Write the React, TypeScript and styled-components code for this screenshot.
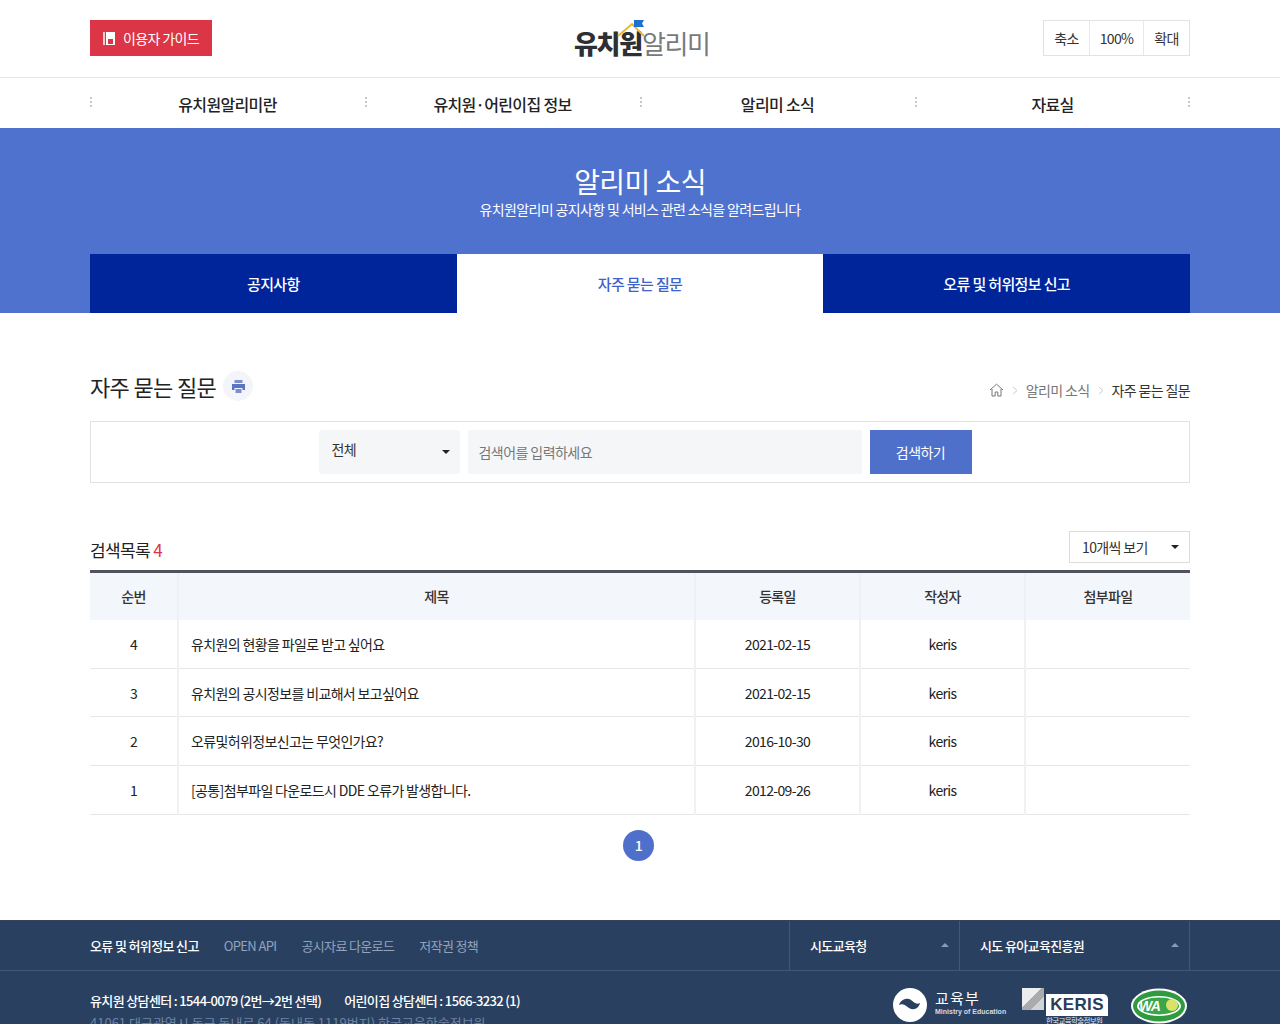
import React from "react";
import styled, { createGlobalStyle } from "styled-components";

const GlobalStyle = createGlobalStyle`
  * { box-sizing: border-box; }
  html, body { margin: 0; padding: 0; background: #fff; }
  body {
    font-family: "Noto Sans CJK KR", "Noto Sans", sans-serif;
    color: #222;
    letter-spacing: -0.04em;
  }
  ul { list-style: none; margin: 0; padding: 0; }
`;

const rows = [
  { no: 4, title: "유치원의 현황을 파일로 받고 싶어요", date: "2021-02-15" },
  { no: 3, title: "유치원의 공시정보를 비교해서 보고싶어요", date: "2021-02-15" },
  { no: 2, title: "오류및허위정보신고는 무엇인가요?", date: "2016-10-30" },
  { no: 1, title: "[공통]첨부파일 다운로드시 DDE 오류가 발생합니다.", date: "2012-09-26" },
];

const Inner = styled.div`
  width: 1100px;
  margin: 0 auto;
`;

const Header = styled.header`
  height: 78px;
  border-bottom: 1px solid #e6e6e6;
`;

const HeaderInner = styled(Inner)`
  height: 77px;
  padding-top: 20px;
  display: grid;
  grid-template-columns: 1fr auto 1fr;
  align-items: flex-start;
`;

const GuideButton = styled.a`
  justify-self: start;
  width: 122px;
  height: 36px;
  display: flex;
  align-items: center;
  justify-content: center;
  gap: 7px;
  background: #dc3545;
  color: #fff;
  font-size: 14px;
`;

const Logo = styled.div`
  position: relative;
  margin-top: 5px;
  width: 132px;
  height: 34px;
  display: flex;
  align-items: center;
  font-size: 26px;
  line-height: 34px;
  letter-spacing: -0.05em;
  padding-top: 2px;
  color: #77797c;
  white-space: nowrap;
`;

const LogoStrong = styled.strong`
  color: #2c2f33;
  font-weight: 900;
`;

const LogoRoof = styled.svg`
  position: absolute;
  left: 40px;
  top: -5px;
`;

const ZoomGroup = styled.div`
  justify-self: end;
  display: flex;
  height: 36px;
  border: 1px solid #e2e2e2;
`;

const ZoomItem = styled.span<{ $w: number; $last?: boolean }>`
  width: ${({ $w }) => $w}px;
  display: flex;
  align-items: center;
  justify-content: center;
  font-size: 14px;
  color: #333;
  border-right: ${({ $last }) => ($last ? "none" : "1px solid #e8e8e8")};
`;

const Nav = styled.nav`
  height: 50px;
`;

const NavList = styled.ul`
  display: grid;
  grid-template-columns: repeat(4, 275px);
  height: 50px;
`;

const NavItem = styled.li`
  position: relative;
  display: flex;
  align-items: center;
  justify-content: center;
  padding-top: 1px;
  font-size: 16px;
  font-weight: 500;
  color: #222;

  &::before {
    content: "";
    position: absolute;
    left: 0;
    top: 19px;
    width: 2px;
    height: 10px;
    background: repeating-linear-gradient(#c8c8c8 0 2px, transparent 2px 4px);
  }

  &:last-child::after {
    content: "";
    position: absolute;
    right: 0;
    top: 19px;
    width: 2px;
    height: 10px;
    background: repeating-linear-gradient(#c8c8c8 0 2px, transparent 2px 4px);
  }
`;

const Banner = styled.section`
  height: 185px;
  background: #5072cf;
  color: #fff;
  text-align: center;
  padding-top: 33px;
`;

const BannerTitle = styled.h1`
  margin: 0;
  font-size: 28px;
  line-height: 40px;
  font-weight: 400;
  letter-spacing: -0.02em;
`;

const BannerText = styled.p`
  margin: 0;
  font-size: 14px;
  line-height: 17px;
`;

const Tabs = styled(Inner)`
  margin-top: 36px;
  display: grid;
  grid-template-columns: repeat(3, 1fr);
  height: 59px;
`;

const Tab = styled.a<{ $active?: boolean }>`
  display: flex;
  align-items: center;
  justify-content: center;
  font-size: 15px;
  font-weight: 500;
  background: ${({ $active }) => ($active ? "#fff" : "#00259b")};
  color: ${({ $active }) => ($active ? "#3f63c8" : "#fff")};
`;

const Main = styled(Inner)`
  padding-top: 56px;
`;

const TitleRow = styled.div`
  display: flex;
  align-items: flex-start;
  justify-content: space-between;
  height: 52px;
`;

const PageTitle = styled.h2`
  margin: 0;
  display: flex;
  align-items: center;
  gap: 7px;
  height: 34px;
  font-size: 22px;
  font-weight: 400;
  color: #222;
`;

const PrintButton = styled.span`
  width: 30px;
  height: 30px;
  border-radius: 50%;
  background: #f3f5fa;
  display: flex;
  align-items: center;
  justify-content: center;
`;

const Breadcrumb = styled.ol`
  margin: 12px 0 0;
  padding: 0;
  list-style: none;
  display: flex;
  align-items: center;
  height: 18px;
  font-size: 14px;
  color: #777;
`;

const Crumb = styled.li<{ $current?: boolean }>`
  display: flex;
  align-items: center;
  color: ${({ $current }) => ($current ? "#333" : "#777")};
`;

const CrumbArrow = styled.svg`
  margin: 0 8px;
`;

const SearchBox = styled.form`
  height: 62px;
  border: 1px solid #e2e2e2;
  display: flex;
  justify-content: center;
  padding: 8px 0 0 10px;
  gap: 8px;
`;

const SelectField = styled.div`
  position: relative;
  width: 141px;
  height: 44px;
  background: #f4f6f8;
  border-radius: 3px;
  padding: 0 13px;
  font-size: 14px;
  line-height: 38px;
  color: #333;
`;

const Caret = styled.span<{ $up?: boolean; $color?: string }>`
  position: absolute;
  right: 10px;
  top: 50%;
  margin-top: -2px;
  border-left: 4px solid transparent;
  border-right: 4px solid transparent;
  border-top: ${({ $up, $color }) => ($up ? "none" : `4px solid ${$color ?? "#222"}`)};
  border-bottom: ${({ $up, $color }) => ($up ? `4px solid ${$color ?? "#222"}` : "none")};
`;

const SearchInput = styled.input`
  width: 394px;
  height: 44px;
  border: none;
  outline: none;
  background: #f4f6f8;
  padding: 0 11px;
  font-family: inherit;
  font-size: 14px;
  letter-spacing: -0.04em;

  &::placeholder {
    color: #777;
    opacity: 1;
  }
`;

const SearchButton = styled.button`
  width: 102px;
  height: 44px;
  border: none;
  background: #4f70ca;
  color: #fff;
  font-family: inherit;
  font-size: 14px;
  letter-spacing: -0.04em;
`;

const ListHead = styled.div`
  margin-top: 48px;
  display: flex;
  align-items: flex-end;
  justify-content: space-between;
  height: 32px;
`;

const ListTitle = styled.h3`
  margin: 0;
  font-size: 17px;
  line-height: 26px;
  font-weight: 400;
  color: #222;
`;

const Count = styled.span`
  color: #dc3545;
`;

const PageSize = styled.div`
  position: relative;
  width: 121px;
  height: 32px;
  border: 1px solid #dcdcdc;
  padding-left: 12px;
  font-size: 14px;
  line-height: 31px;
  color: #333;
`;

const Table = styled.table`
  width: 100%;
  margin-top: 7px;
  border-collapse: collapse;
  table-layout: fixed;
  border-top: 3px solid #50535c;
  font-size: 14px;
`;

const HeadCell = styled.th<{ $w: number }>`
  width: ${({ $w }) => $w}px;
  height: 48px;
  background: #f3f6fa;
  font-weight: 500;
  color: #333;
  border-left: 2px solid #eef0f3;

  &:first-child {
    border-left: none;
  }
`;

const Row = styled.tr`
  border-bottom: 1px solid #e6e6e6;
`;

const Cell = styled.td<{ $left?: boolean }>`
  height: 48.7px;
  padding: 0 ${({ $left }) => ($left ? "12px" : "0")};
  text-align: ${({ $left }) => ($left ? "left" : "center")};
  color: #222;
  border-left: 2px solid #f0f1f3;

  &:first-child {
    border-left: none;
  }
`;

const Pagination = styled.div`
  display: flex;
  justify-content: center;
  padding: 15px 3px 0 0;
  height: 105px;
`;

const PageNumber = styled.span`
  width: 31px;
  height: 31px;
  border-radius: 50%;
  background: #4f70ca;
  color: #fff;
  display: flex;
  align-items: center;
  justify-content: center;
  font-size: 14px;
  font-weight: 500;
`;

const Footer = styled.footer`
  background: #2a4060;
  color: #fff;
  border-top: 1px solid #34435b;
  height: 160px;
`;

const FooterTop = styled.div`
  height: 50px;
  border-bottom: 1px solid #41587a;
`;

const FooterTopInner = styled(Inner)`
  display: flex;
  height: 49px;
  align-items: stretch;
`;

const FooterLinks = styled.ul`
  flex: 1;
  display: flex;
  align-items: center;
  gap: 25px;
  font-size: 13px;
`;

const FooterLink = styled.li<{ $strong?: boolean }>`
  color: ${({ $strong }) => ($strong ? "#fff" : "#93a3bd")};
  font-weight: ${({ $strong }) => ($strong ? 500 : 400)};
`;

const FooterSelect = styled.div<{ $w: number; $last?: boolean }>`
  position: relative;
  width: ${({ $w }) => $w}px;
  display: flex;
  align-items: center;
  padding-left: 20px;
  font-size: 13px;
  font-weight: 500;
  border-left: 1px solid #41587a;
  border-right: ${({ $last }) => ($last ? "1px solid #41587a" : "none")};
`;

const FooterBody = styled(Inner)`
  display: flex;
  justify-content: space-between;
  padding-top: 18px;
`;

const ContactLine = styled.p`
  margin: 0;
  display: flex;
  gap: 23px;
  font-size: 13px;
  line-height: 24px;
  font-weight: 500;
`;

const Address = styled.p`
  margin: 0;
  font-size: 13px;
  line-height: 20px;
  color: #6f83a3;
  letter-spacing: 0;
`;

const FooterLogos = styled.div`
  display: flex;
  align-items: flex-start;
  margin-top: -1px;
  padding-right: 2px;
`;

const MoeLogo = styled.div`
  display: flex;
  gap: 8px;
  width: 129px;
`;

const MoeText = styled.div`
  display: flex;
  flex-direction: column;
  padding-top: 1px;
`;

const MoeName = styled.span`
  font-size: 15px;
  line-height: 17px;
  letter-spacing: 0.08em;
`;

const MoeSub = styled.span`
  font-family: "Liberation Sans", sans-serif;
  font-size: 7px;
  line-height: 12px;
  font-weight: 700;
  letter-spacing: 0;
  color: #d5dbe5;
  white-space: nowrap;
`;

const KerisLogo = styled.div`
  position: relative;
  width: 108px;
  padding: 6px 0 0 24px;
`;

const KerisCube = styled.span`
  position: absolute;
  left: 0;
  top: 0;
  width: 22px;
  height: 22px;
  background: linear-gradient(135deg, #eceded 0 45%, #a9abad 45% 70%, #d2d3d4 70%);
`;

const KerisBadge = styled.div`
  width: 62px;
  height: 22px;
  background: #fff;
  border-radius: 0 5px 0 0;
  color: #2b3b5a;
  font-family: "Liberation Sans", sans-serif;
  font-size: 17px;
  font-weight: 700;
  line-height: 22px;
  letter-spacing: 0.02em;
  text-align: center;
`;

const KerisName = styled.div`
  font-size: 7.5px;
  line-height: 10px;
  color: #e3e7ee;
  white-space: nowrap;
`;

export default function App() {
  return (
    <>
      <GlobalStyle />
      <Header>
        <HeaderInner>
          <GuideButton>
            <svg width="13" height="13" viewBox="0 0 13 13">
              <rect x="0" y="0" width="2" height="13" fill="#fff" opacity="0.75" />
              <path d="M3 0h9v13H3z" fill="#fff" />
              <rect x="5" y="7" width="5" height="5" fill="#dc3545" />
            </svg>
            이용자 가이드
          </GuideButton>
          <Logo>
            <LogoRoof width="34" height="20" viewBox="0 0 34 20">
              <path d="M4 16 L18 4 L30 16" fill="none" stroke="#f0b429" strokeWidth="2" />
              <path d="M20 0h10l-2 3.5 2 3.5H20z" fill="#1f6fd0" />
            </LogoRoof>
            <LogoStrong>유치원</LogoStrong>알리미
          </Logo>
          <ZoomGroup>
            <ZoomItem $w={46}>축소</ZoomItem>
            <ZoomItem $w={54}>100%</ZoomItem>
            <ZoomItem $w={45} $last>확대</ZoomItem>
          </ZoomGroup>
        </HeaderInner>
      </Header>

      <Nav>
        <Inner>
          <NavList>
            <NavItem>유치원알리미란</NavItem>
            <NavItem>유치원·어린이집 정보</NavItem>
            <NavItem>알리미 소식</NavItem>
            <NavItem>자료실</NavItem>
          </NavList>
        </Inner>
      </Nav>

      <Banner>
        <BannerTitle>알리미 소식</BannerTitle>
        <BannerText>유치원알리미 공지사항 및 서비스 관련 소식을 알려드립니다</BannerText>
        <Tabs>
          <Tab>공지사항</Tab>
          <Tab $active>자주 묻는 질문</Tab>
          <Tab>오류 및 허위정보 신고</Tab>
        </Tabs>
      </Banner>

      <Main>
        <TitleRow>
          <PageTitle>
            자주 묻는 질문
            <PrintButton>
              <svg width="15" height="15" viewBox="0 0 15 15">
                <path d="M3.5 1h8v3h-8z" fill="#7b8fd0" />
                <path d="M1 5h13v6h-2.5V9h-8v2H1z" fill="#5a74c4" />
                <path d="M4.5 10h6v4h-6z" fill="#7b8fd0" />
              </svg>
            </PrintButton>
          </PageTitle>
          <Breadcrumb>
            <Crumb>
              <svg width="15" height="14" viewBox="0 0 15 14" fill="none" stroke="#777" strokeWidth="1">
                <path d="M1 7 7.5 1.2 14 7" />
                <path d="M3 6v7h3.2V9h2.6v4H12V6" />
              </svg>
              <CrumbArrow width="6" height="9" viewBox="0 0 6 9" fill="none" stroke="#ccc">
                <path d="M1 1l4 3.5L1 8" />
              </CrumbArrow>
            </Crumb>
            <Crumb>
              알리미 소식
              <CrumbArrow width="6" height="9" viewBox="0 0 6 9" fill="none" stroke="#ccc">
                <path d="M1 1l4 3.5L1 8" />
              </CrumbArrow>
            </Crumb>
            <Crumb $current>자주 묻는 질문</Crumb>
          </Breadcrumb>
        </TitleRow>

        <SearchBox>
          <SelectField>
            전체
            <Caret />
          </SelectField>
          <SearchInput placeholder="검색어를 입력하세요" />
          <SearchButton type="button">검색하기</SearchButton>
        </SearchBox>

        <ListHead>
          <ListTitle>
            검색목록 <Count>4</Count>
          </ListTitle>
          <PageSize>
            10개씩 보기
            <Caret />
          </PageSize>
        </ListHead>

        <Table>
          <thead>
            <tr>
              <HeadCell $w={88}>순번</HeadCell>
              <HeadCell $w={517}>제목</HeadCell>
              <HeadCell $w={165}>등록일</HeadCell>
              <HeadCell $w={165}>작성자</HeadCell>
              <HeadCell $w={165}>첨부파일</HeadCell>
            </tr>
          </thead>
          <tbody>
            {rows.map((r) => (
              <Row key={r.no}>
                <Cell>{r.no}</Cell>
                <Cell $left>{r.title}</Cell>
                <Cell>{r.date}</Cell>
                <Cell>keris</Cell>
                <Cell />
              </Row>
            ))}
          </tbody>
        </Table>

        <Pagination>
          <PageNumber>1</PageNumber>
        </Pagination>
      </Main>

      <Footer>
        <FooterTop>
          <FooterTopInner>
            <FooterLinks>
              <FooterLink $strong>오류 및 허위정보 신고</FooterLink>
              <FooterLink>OPEN API</FooterLink>
              <FooterLink>공시자료 다운로드</FooterLink>
              <FooterLink>저작권 정책</FooterLink>
            </FooterLinks>
            <FooterSelect $w={170}>
              시도교육청
              <Caret $up $color="#8a9ab4" />
            </FooterSelect>
            <FooterSelect $w={231} $last>
              시도 유아교육진흥원
              <Caret $up $color="#8a9ab4" />
            </FooterSelect>
          </FooterTopInner>
        </FooterTop>
        <FooterBody>
          <div>
            <ContactLine>
              <span>유치원 상담센터 : 1544-0079 (2번→2번 선택)</span>
              <span>어린이집 상담센터 : 1566-3232 (1)</span>
            </ContactLine>
            <Address>41061 대구광역시 동구 동내로 64 (동내동 1119번지) 한국교육학술정보원</Address>
          </div>
          <FooterLogos>
            <MoeLogo>
              <svg width="34" height="34" viewBox="0 0 34 34">
                <circle cx="17" cy="17" r="17" fill="#fff" />
                <path d="M6 17a8 8 0 0 1 12-5c3 2 5 5 9 3-1 5-6 8-11 5-3-2-6-5-10-3z" fill="#2a4060" />
                <path d="M5 21c3-2 6 0 8 3 3 3 9 4 14-1-3 6-9 8-14 6-4-2-7-5-8-8z" fill="#2a4060" opacity="0" />
              </svg>
              <MoeText>
                <MoeName>교육부</MoeName>
                <MoeSub>Ministry of Education</MoeSub>
              </MoeText>
            </MoeLogo>
            <KerisLogo>
              <KerisCube />
              <KerisBadge>KERIS</KerisBadge>
              <KerisName>한국교육학술정보원</KerisName>
            </KerisLogo>
            <svg width="58" height="36" viewBox="0 0 58 36">
              <ellipse cx="29" cy="18" rx="28" ry="17.5" fill="#fff" />
              <ellipse cx="29" cy="18" rx="26" ry="15.5" fill="#2f9a3e" />
              <ellipse cx="29" cy="18" rx="22" ry="10" fill="#fff" />
              <ellipse cx="29" cy="18" rx="20" ry="8.5" fill="#3aa648" />
              <text x="9" y="23" fontFamily="Liberation Sans, sans-serif" fontSize="14" fontStyle="italic" fontWeight="700" fill="#fff">WA</text>
              <circle cx="42" cy="17" r="6" fill="#d9e36a" />
            </svg>
          </FooterLogos>
        </FooterBody>
      </Footer>
    </>
  );
}
